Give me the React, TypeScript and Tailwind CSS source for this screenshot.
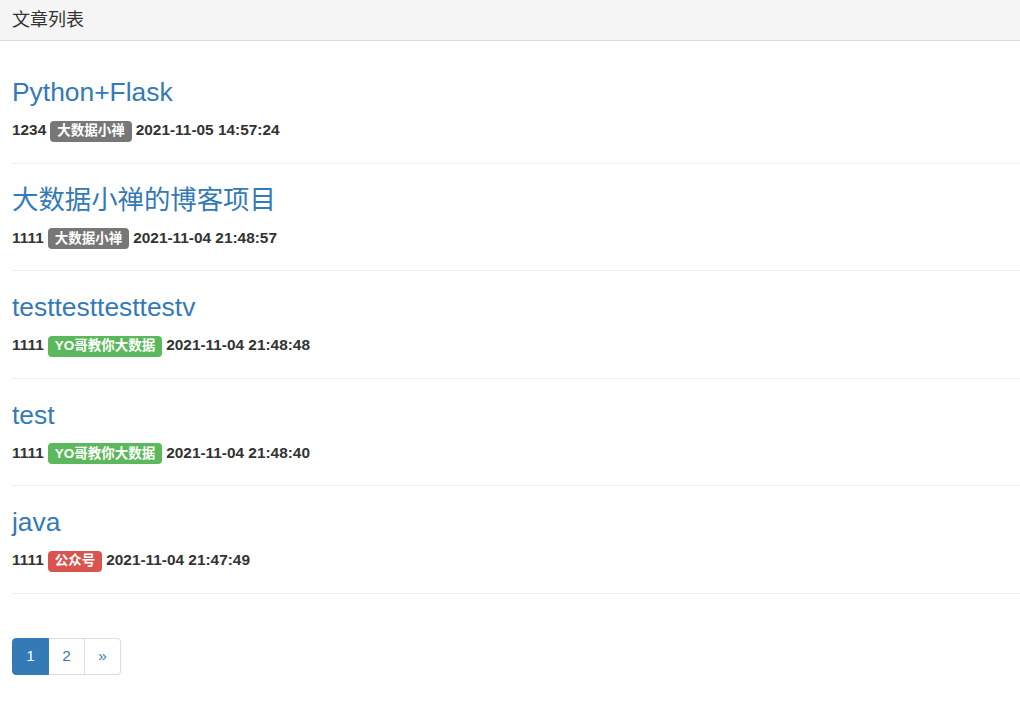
import React from "react";

type Tag = { name: string; color: string };

type Article = {
  title: string;
  author: string;
  tag: Tag;
  date: string;
};

const articles: Article[] = [
  { title: "Python+Flask", author: "1234", tag: { name: "大数据小禅", color: "bg-[#777777]" }, date: "2021-11-05 14:57:24" },
  { title: "大数据小禅的博客项目", author: "1111", tag: { name: "大数据小禅", color: "bg-[#777777]" }, date: "2021-11-04 21:48:57" },
  { title: "testtesttesttestv", author: "1111", tag: { name: "YO哥教你大数据", color: "bg-[#5cb85c]" }, date: "2021-11-04 21:48:48" },
  { title: "test", author: "1111", tag: { name: "YO哥教你大数据", color: "bg-[#5cb85c]" }, date: "2021-11-04 21:48:40" },
  { title: "java", author: "1111", tag: { name: "公众号", color: "bg-[#d9534f]" }, date: "2021-11-04 21:47:49" },
];

const font = { fontFamily: '"Liberation Sans", Arial, "Noto Sans CJK SC", sans-serif' };

const App = () => {
  return (
    <div className="min-h-screen bg-white text-[#333]" style={font}>
      {/* panel heading */}
      <div className="h-[41px] bg-[#f5f5f5] border-b border-[#dddddd] pl-3 flex items-center text-[18px]">
        文章列表
      </div>

      {/* article list */}
      <div className="pl-3 pt-[15px]">
        {articles.map((a, i) => (
          <div key={i} className="pt-[23px] pb-[22.5px] border-b border-[#eeeeee]">
            <h3 className="text-[26.4px] leading-[26px] text-[#337ab7] cursor-pointer">
              {a.title}
            </h3>
            <div className="mt-[15px] h-5 flex items-center gap-[4px] text-[15.4px] font-bold">
              <span>{a.author}</span>
              <span
                className={`${a.tag.color} text-white text-[13.5px] leading-none h-[21px] px-[7px] rounded-[4px] inline-flex items-center mt-[2px]`}
              >
                {a.tag.name}
              </span>
              <span>{a.date}</span>
            </div>
          </div>
        ))}

        {/* pagination */}
        <div className="mt-[44px] flex text-[15.4px]">
          <span className="w-[37px] h-[37px] flex items-center justify-center bg-[#337ab7] border border-[#337ab7] text-white rounded-l-[4px]">
            1
          </span>
          <span className="w-[36px] h-[37px] flex items-center justify-center border border-[#dddddd] border-l-0 text-[#337ab7]">
            2
          </span>
          <span className="w-[36px] h-[37px] flex items-center justify-center border border-[#dddddd] border-l-0 text-[#337ab7] rounded-r-[4px]">
            »
          </span>
        </div>
      </div>
    </div>
  );
};

export default App;
